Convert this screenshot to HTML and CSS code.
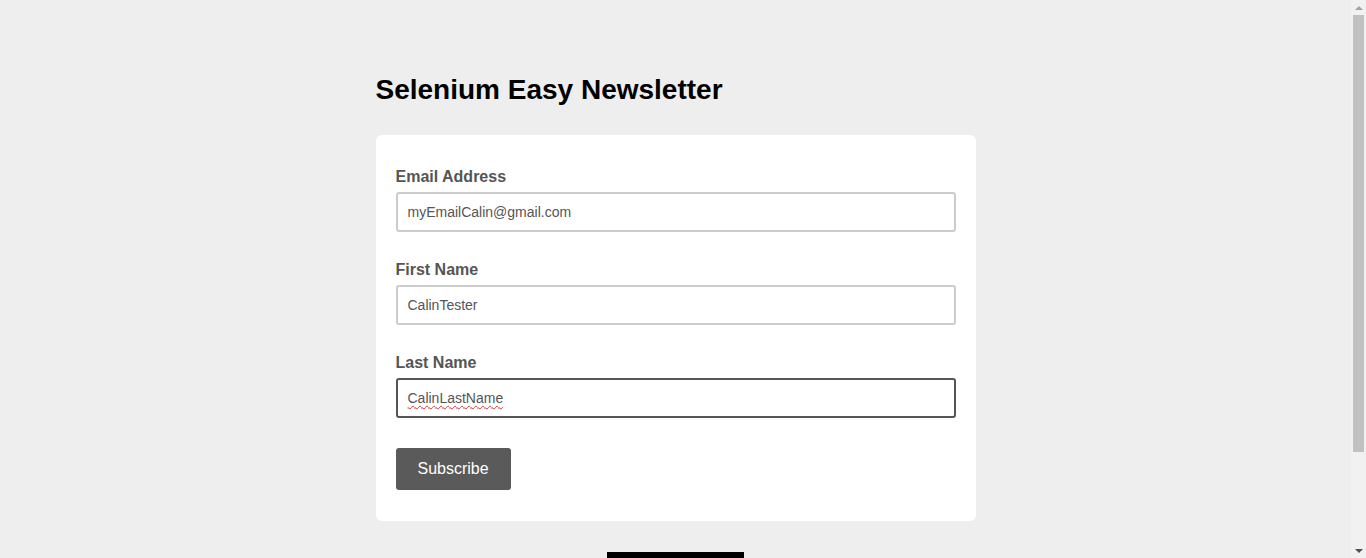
FILE: index.html
```html
<!DOCTYPE html>
<html lang="en">
<head>
<meta charset="utf-8">
<title>Selenium Easy Newsletter</title>
<link rel="stylesheet" href="styles.css">
</head>
<body>
<main class="page">
  <h1 class="title">Selenium Easy Newsletter</h1>
  <form class="card">
    <div class="field">
      <label class="label" for="email">Email Address</label>
      <input class="input" id="email" type="text" value="myEmailCalin@gmail.com">
    </div>
    <div class="field">
      <label class="label" for="fname">First Name</label>
      <input class="input" id="fname" type="text" value="CalinTester">
    </div>
    <div class="field">
      <label class="label" id="lname-label">Last Name</label>
      <div class="input input-focused" role="textbox" aria-labelledby="lname-label" contenteditable="true"><span class="misspelled">CalinLastName</span></div>
    </div>
    <button class="btn" type="button">Subscribe</button>
  </form>
  <div class="footer-bar"></div>
</main>
<div class="scrollbar" aria-hidden="true">
  <div class="sb-arrow sb-up"></div>
  <div class="sb-track"><div class="sb-thumb"></div></div>
  <div class="sb-arrow sb-down"></div>
</div>
</body>
</html>
```

FILE: styles.css
```css
html, body {
  margin: 0;
  padding: 0;
}
body {
  background: #eeeeee;
  font-family: "Liberation Sans", Arial, sans-serif;
  color: #555;
  padding-right: 15px;
}
.page {
  width: 600px;
  margin: 0 auto;
  padding: 73px 0 80px;
  display: flex;
  flex-direction: column;
}
.title {
  margin: 0 0 28px;
  font-size: 28px;
  line-height: 34px;
  font-weight: bold;
  color: #000;
}
.card {
  background: #fff;
  border-radius: 6px;
  padding: 32px 20px 31px;
  display: flex;
  flex-direction: column;
  align-items: flex-start;
}
.field {
  display: flex;
  flex-direction: column;
  align-self: stretch;
  margin-bottom: 28px;
}
.label {
  font-size: 16px;
  font-weight: bold;
  line-height: 20px;
  color: #555;
  margin-bottom: 5px;
}
.input {
  box-sizing: border-box;
  height: 40px;
  width: 100%;
  border: 2px solid #cccccc;
  border-radius: 3px;
  padding: 0 10px;
  font-family: "Liberation Sans", Arial, sans-serif;
  font-size: 14px;
  color: #555;
  background: #fff;
  outline: none;
}
div.input {
  display: flex;
  align-items: center;
  white-space: nowrap;
}
.input-focused {
  border-color: #555555;
}
.misspelled {
  text-decoration: underline wavy #e03030;
  text-decoration-thickness: 1px;
  text-underline-offset: 2px;
}
.btn {
  margin-top: 2px;
  height: 42px;
  padding: 0 22px;
  background: #5a5a5a;
  color: #fff;
  border: none;
  border-radius: 3px;
  font-family: "Liberation Sans", Arial, sans-serif;
  font-size: 16px;
}
.footer-bar {
  align-self: center;
  width: 137px;
  height: 40px;
  margin-top: 31px;
  background: #000;
}
.scrollbar {
  position: fixed;
  top: 0;
  right: 0;
  bottom: 0;
  width: 15px;
  background: #f1f1f1;
  display: flex;
  flex-direction: column;
}
.sb-arrow {
  height: 15px;
  display: flex;
  align-items: center;
  justify-content: center;
}
.sb-up::before {
  content: "";
  border-left: 4px solid transparent;
  border-right: 4px solid transparent;
  border-bottom: 4px solid #a3a3a3;
}
.sb-down::before {
  content: "";
  border-left: 4px solid transparent;
  border-right: 4px solid transparent;
  border-top: 4px solid #505050;
}
.sb-track {
  flex: 1;
  padding: 0 2px;
}
.sb-thumb {
  height: 437px;
  background: #c1c1c1;
}
```
